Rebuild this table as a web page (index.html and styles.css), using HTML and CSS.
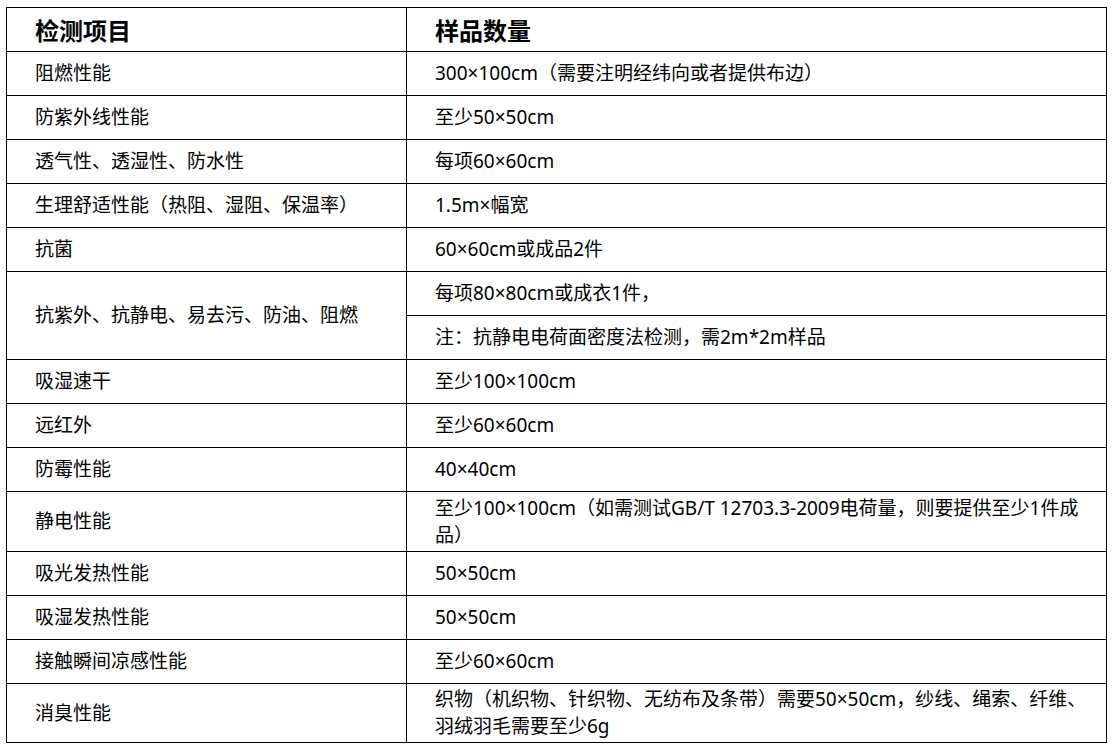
FILE: index.html
```html
<!DOCTYPE html>
<html lang="zh-CN">
<head>
<meta charset="utf-8">
<title>检测项目</title>
<link rel="stylesheet" href="styles.css">
</head>
<body>
<table class="sample-table">
  <colgroup>
    <col class="col-item">
    <col class="col-qty">
  </colgroup>
  <thead>
    <tr class="head-row">
      <th>检测项目</th>
      <th>样品数量</th>
    </tr>
  </thead>
  <tbody>
    <tr><td>阻燃性能</td><td>300×100cm（需要注明经纬向或者提供布边）</td></tr>
    <tr><td>防紫外线性能</td><td>至少50×50cm</td></tr>
    <tr><td>透气性、透湿性、防水性</td><td>每项60×60cm</td></tr>
    <tr><td>生理舒适性能（热阻、湿阻、保温率）</td><td>1.5m×幅宽</td></tr>
    <tr><td>抗菌</td><td>60×60cm或成品2件</td></tr>
    <tr><td rowspan="2">抗紫外、抗静电、易去污、防油、阻燃</td><td>每项80×80cm或成衣1件，</td></tr>
    <tr><td>注：抗静电电荷面密度法检测，需2m*2m样品</td></tr>
    <tr><td>吸湿速干</td><td>至少100×100cm</td></tr>
    <tr><td>远红外</td><td>至少60×60cm</td></tr>
    <tr><td>防霉性能</td><td>40×40cm</td></tr>
    <tr class="tall"><td>静电性能</td><td class="multi">至少100×100cm（如需测试GB/T 12703.3-2009电荷量，则要提供至少1件成<br>品）</td></tr>
    <tr><td>吸光发热性能</td><td>50×50cm</td></tr>
    <tr><td>吸湿发热性能</td><td>50×50cm</td></tr>
    <tr><td>接触瞬间凉感性能</td><td>至少60×60cm</td></tr>
    <tr class="tall last"><td>消臭性能</td><td class="multi">织物（机织物、针织物、无纺布及条带）需要50×50cm，纱线、绳索、纤维、<br>羽绒羽毛需要至少6g</td></tr>
  </tbody>
</table>
</body>
</html>
```

FILE: styles.css
```css
html, body {
  margin: 0;
  padding: 0;
  background: #ffffff;
}

body {
  padding: 7px 0 0 6px;
  font-family: "Noto Sans", "Noto Sans CJK SC", sans-serif;
  color: #000000;
}

.sample-table {
  border-collapse: collapse;
  table-layout: fixed;
  width: 1101px;
}

.col-item { width: 400px; }
.col-qty { width: 700px; }

.sample-table th,
.sample-table td {
  border: 1px solid #000000;
  padding: 0 12px 0 28px;
  height: 43px;
  text-align: left;
  vertical-align: middle;
  white-space: nowrap;
}

.sample-table th {
  font-size: 24px;
  font-weight: 700;
  line-height: 24px;
  padding-top: 2px;
  height: 41px;
}

.sample-table td {
  font-size: 19px;
  line-height: 27px;
}

.sample-table tr.tall td {
  height: 59px;
}

.sample-table tr.last td {
  height: 58px;
}
```
